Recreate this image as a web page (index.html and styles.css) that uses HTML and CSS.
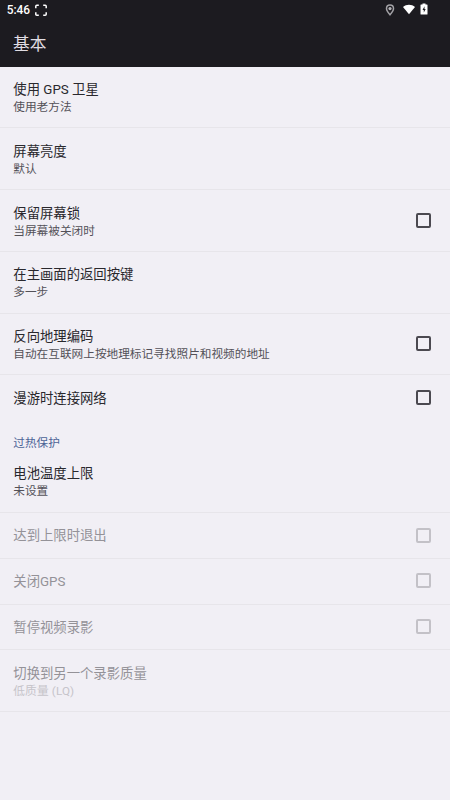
FILE: index.html
```html
<!DOCTYPE html>
<html lang="zh-CN">
<head>
<meta charset="utf-8">
<title>基本</title>
<link rel="stylesheet" href="styles.css">
</head>
<body>
<header>
<div class="status">
<span class="time">5:46</span>
<svg class="frame" width="12" height="13" viewBox="0 0 12 13"><path d="M.8 4.300V2.300Q.8 1.300 1.800 1.300H3.800M8.200 1.300h2Q11.200 1.300 11.200 2.300v2M11.200 8.300v2Q11.200 11.300 10.200 11.300H8.200M3.800 11.300H1.800Q.8 11.300.8 10.300V8.300" fill="none" stroke="#fff" stroke-width="1.5"/></svg>
<span class="spacer"></span>
<svg class="pin" width="10" height="12" viewBox="0 0 10 12"><path d="M5 1C2.900 1 1.500 2.500 1.500 4.500 1.500 7 5 10.800 5 10.800S8.500 7 8.500 4.500C8.500 2.500 7.100 1 5 1Z" fill="none" stroke="#a3a2a6" stroke-width="1.500"/><circle cx="5" cy="4.600" r="1.600" fill="#b5b4b8"/></svg>
<svg class="wifi" width="12" height="11" viewBox="0 0 12 11"><path d="M0 3C3.400-.1 8.600-.1 12 3L6 10.300Z" fill="#fff"/></svg>
<svg class="battery" width="8" height="12" viewBox="0 0 8 12"><path d="M2.500.5h3v1H7q.5 0 .5.500v9q0 .5-.5.500H1q-.5 0-.5-.5V2q0-.5.5-.5h1.500Z" fill="#fff"/><path d="M4.500 3.300 2.500 6.900h1.300v2.700l1.900-3.600H4.500Z" fill="#1c1b20"/></svg>
</div>
<h1>基本</h1>
</header>
<main>
<div class="row tall"><div><p class="title">使用 GPS 卫星</p><p class="sub">使用老方法</p></div></div>
<div class="row tall"><div><p class="title">屏幕亮度</p><p class="sub">默认</p></div></div>
<div class="row tall"><div><p class="title">保留屏幕锁</p><p class="sub">当屏幕被关闭时</p></div><i class="box"></i></div>
<div class="row tall"><div><p class="title">在主画面的返回按键</p><p class="sub">多一步</p></div></div>
<div class="row tall"><div><p class="title">反向地理编码</p><p class="sub">自动在互联网上按地理标记寻找照片和视频的地址</p></div><i class="box"></i></div>
<div class="row last"><p class="title">漫游时连接网络</p><i class="box"></i></div>
<h2>过热保护</h2>
<div class="row first"><div><p class="title">电池温度上限</p><p class="sub">未设置</p></div></div>
<div class="row off"><p class="title">达到上限时退出</p><i class="box"></i></div>
<div class="row off"><p class="title">关闭GPS</p><i class="box"></i></div>
<div class="row off"><p class="title">暂停视频录影</p><i class="box"></i></div>
<div class="row tall off"><div><p class="title">切换到另一个录影质量</p><p class="sub latin">低质量 (LQ)</p></div></div>
</main>
</body>
</html>
```
FILE: styles.css
```css
* { box-sizing: border-box; margin: 0; padding: 0; }
body { height: 800px; background: #f1eff5; color: #29282d; font-family: Roboto, "Noto Sans CJK SC", sans-serif; overflow: hidden; }
header { height: 66.500px; background: #1c1b20; color: #e0dde3; }
.status { display: flex; height: 20px; padding: 0 22.500px 0 6.700px; align-items: center; }
.time { width: 28.300px; font-size: 11.900px; font-weight: 500; line-height: 20px; color: #fff; }
.spacer { flex: 1; }
.wifi { margin: -1px 0 0 8px; }
.battery { margin: -2px 0 0 5px; }
h1 { padding-left: 13px; font-size: 16.700px; font-weight: 400; line-height: 49px; }
.row { display: flex; align-items: center; justify-content: space-between; height: 45.750px; padding: 0 19px 0 13.300px; border-bottom: 1px solid #e7e5ea; }
.tall { height: 61.750px; }
.tall > div { padding-top: 3.400px; }
.title { font-size: 13.350px; line-height: 18px; }
.row > .title { padding-top: 1.600px; }
.sub { font-size: 11.670px; line-height: 17px; color: #535158; }
.last { border-bottom: 0; height: 45px; }
h2 { height: 45.800px; padding: 13px 0 0 13.300px; font-size: 11.670px; font-weight: 400; line-height: 20px; color: #4c6396; }
.first { height: 47px; padding-bottom: 12.800px; }
.box { width: 15px; height: 15px; border: 2px solid #4b4950; border-radius: 2px; flex: none; margin-top: -.6px; }
.off .title { color: #949298; }
.off .sub { color: #c6c4ca; }
.off .box { border-color: #c3c1c7; }
.latin { letter-spacing: .15px; }
```
